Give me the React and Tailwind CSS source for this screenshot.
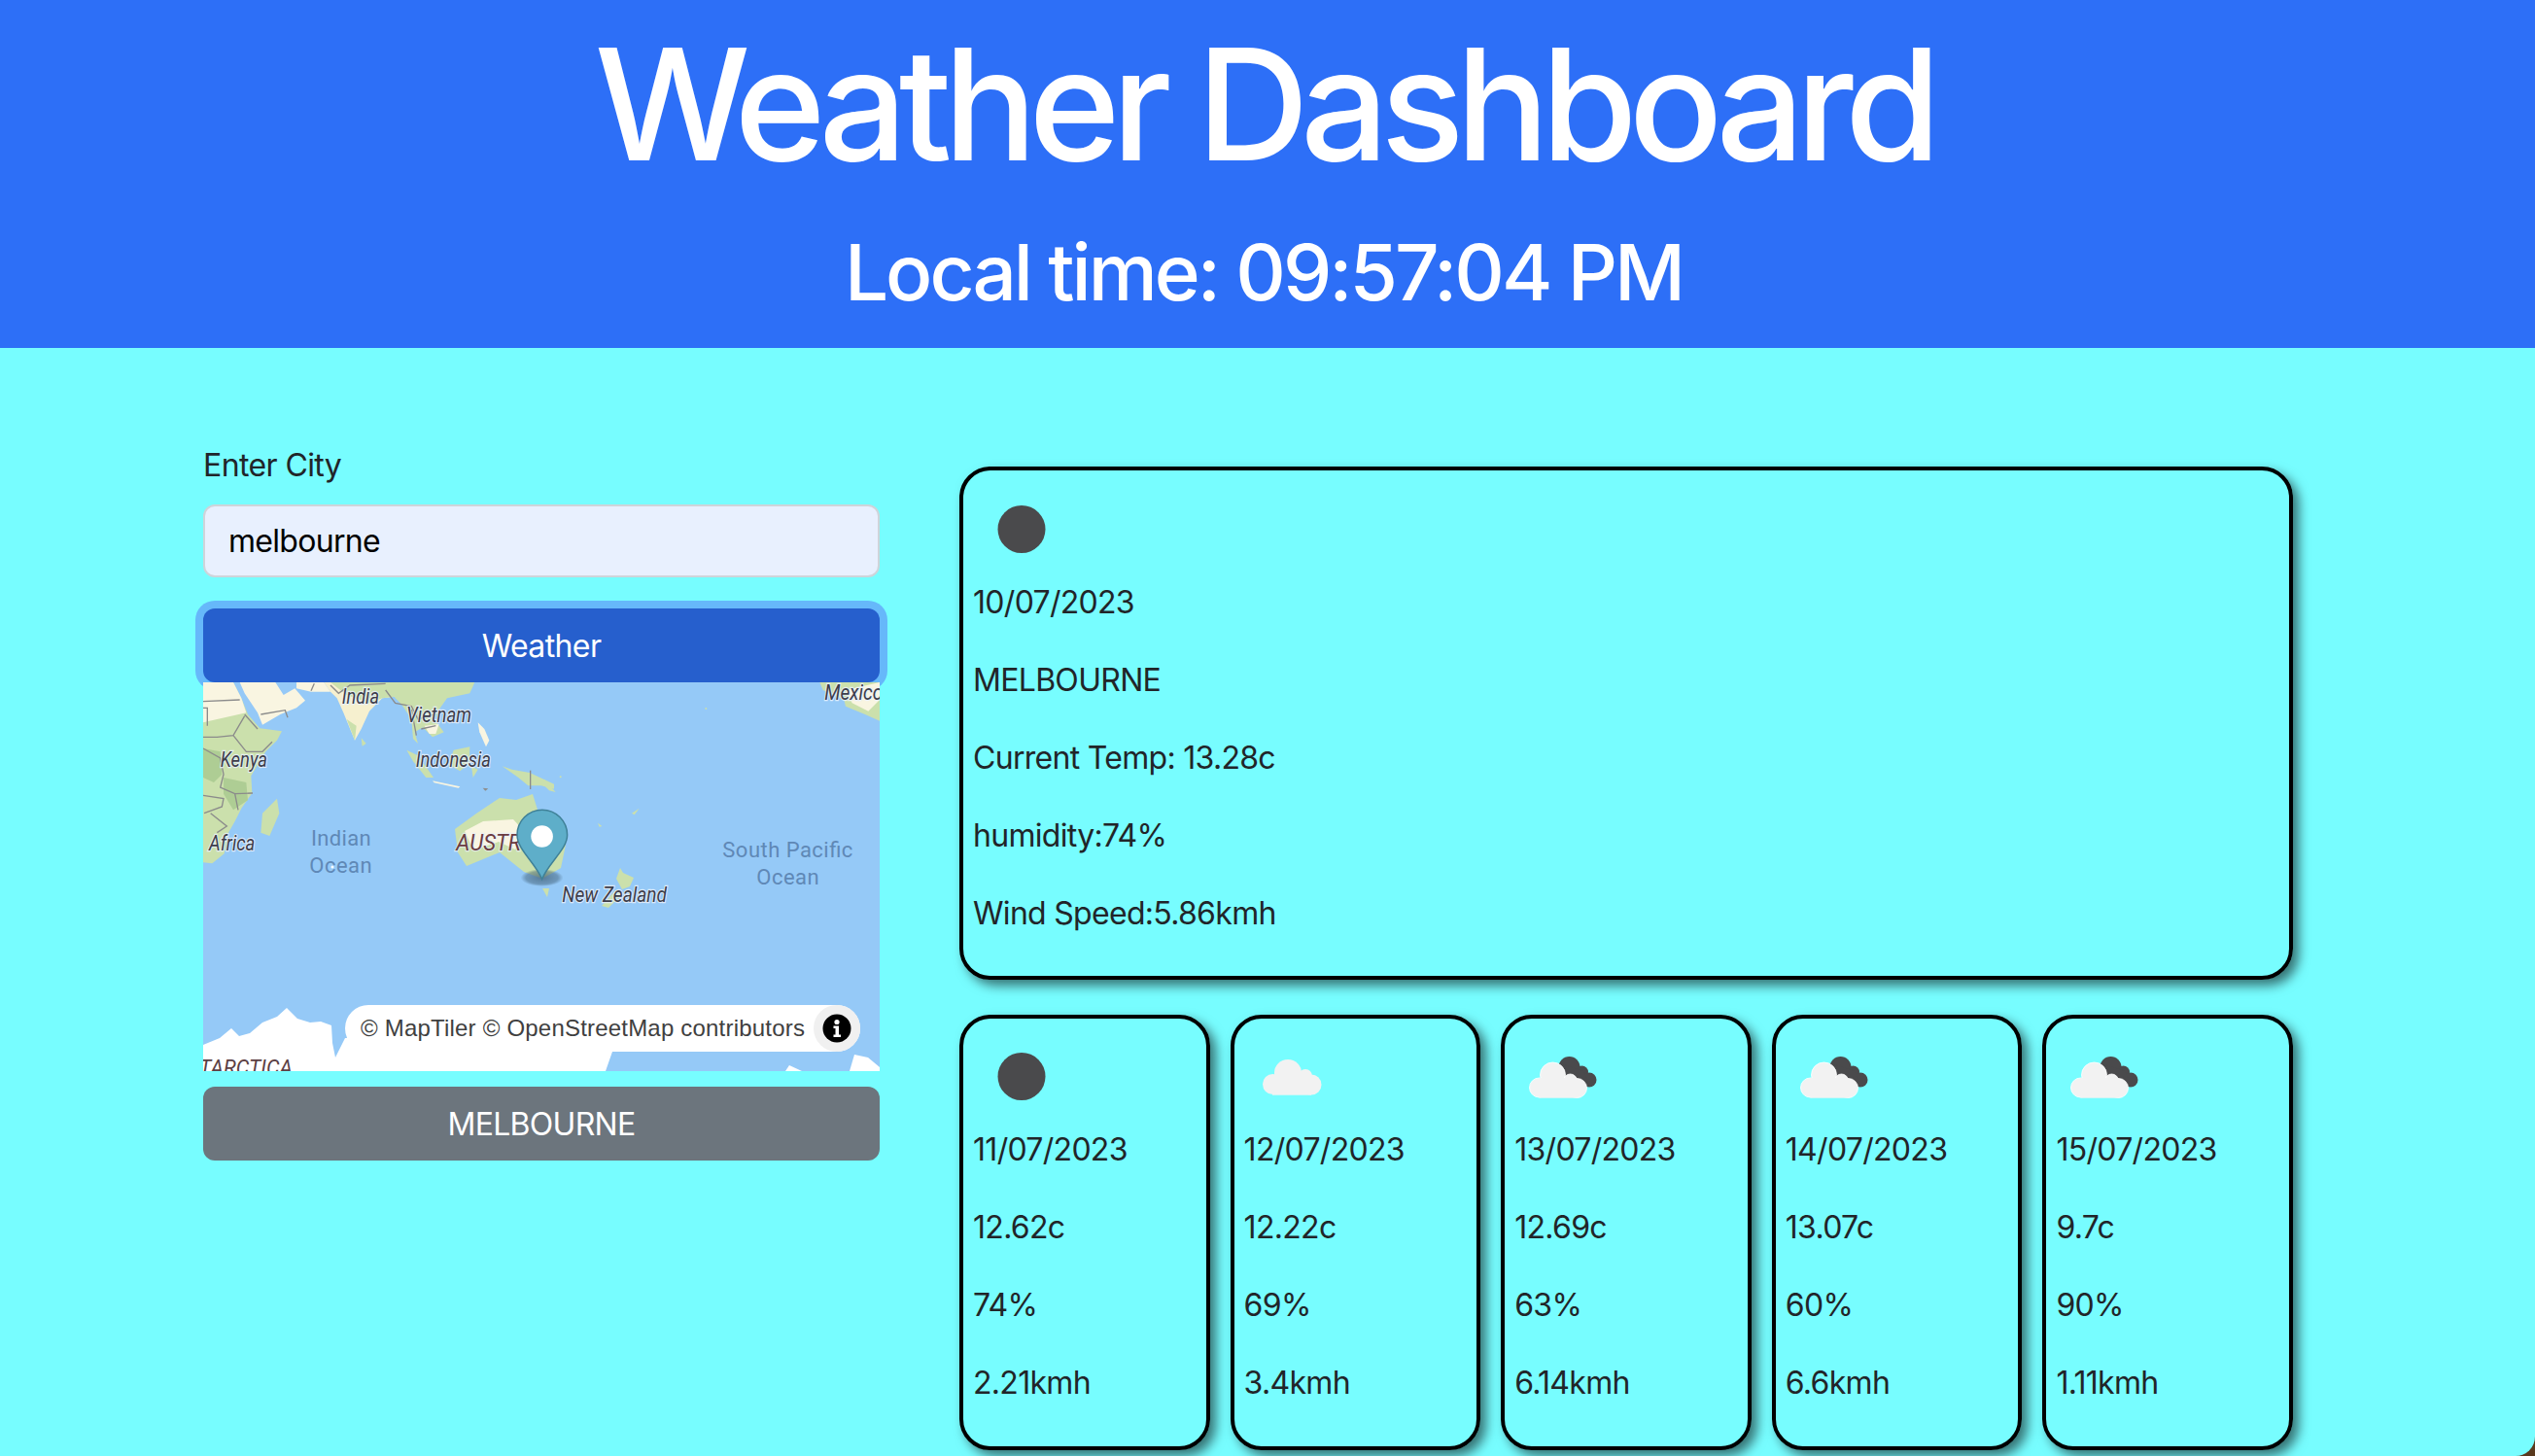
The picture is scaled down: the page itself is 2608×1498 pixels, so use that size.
import React from "react";

const ROW = "text-[32px] leading-[48px] mb-[32px] text-[#212529] whitespace-nowrap tracking-[-0.7px]";
const LABEL =
  "font-['Roboto',sans-serif] italic text-[66px] fill-[#3d3d4a] stroke-[#e8f0fb] stroke-[7px] [stroke-opacity:0.85] [paint-order:stroke]";
const OCEAN = "font-['Roboto',sans-serif] text-[66px] fill-[#5f88b6]";

function MoonIcon() {
  return (
    <svg className="block w-[100px] h-[100px] mb-[1px]" viewBox="0 0 100 100">
      <circle cx="50" cy="49.5" r="24.5" fill="#4a4a4c" />
    </svg>
  );
}

function CloudIcon() {
  return (
    <svg className="block w-[100px] h-[100px] mb-[1px]" viewBox="0 0 100 100">
      <g transform="translate(11 22)" fill="#f2f2f2">
        <circle cx="18.5" cy="35.5" r="10.5" />
        <circle cx="34" cy="24" r="14" />
        <circle cx="52" cy="27" r="7" />
        <circle cx="58" cy="36" r="10.5" />
        <rect x="18" y="30" width="40" height="16.7" />
      </g>
    </svg>
  );
}

function BrokenCloudIcon() {
  return (
    <svg className="block w-[100px] h-[100px] mb-[1px]" viewBox="0 0 100 100">
      <g transform="translate(1.5 17)">
        <g fill="#4a4a4c">
          <circle cx="55" cy="23" r="11" />
          <circle cx="68" cy="28" r="6.5" />
          <circle cx="75.5" cy="36" r="7.5" />
          <path d="M48 20 L70 27 L76 43 L60 42 Z" />
        </g>
        <g fill="#f2f2f2" stroke="#ffffff" strokeWidth="0.8">
          <circle cx="24" cy="44" r="10" />
          <circle cx="38" cy="31" r="13" />
          <circle cx="56" cy="37" r="7" />
          <circle cx="63" cy="44.5" r="10" />
          <rect x="24" y="34" width="39" height="20.7" stroke="none" />
        </g>
      </g>
    </svg>
  );
}

function MapDrawing() {
  const green = "#cbe0ac";
  const cream = "#f9f5e1";
  const deep = "#aecd94";
  const border = "#8b8b8b";
  return (
    <svg className="block w-[696px] h-[400px]" viewBox="209 702 696 400">
      <defs>
        <radialGradient id="pinShadow">
          <stop offset="0" stopColor="#3c5a70" stopOpacity="0.7" />
          <stop offset="0.75" stopColor="#3c5a70" stopOpacity="0.45" />
          <stop offset="1" stopColor="#3c5a70" stopOpacity="0" />
        </radialGradient>
      </defs>
      <rect x="209" y="702" width="696" height="400" fill="#95c9f7" />

      {/* land, west part */}
      <g transform="translate(190 690) scale(0.33333)" className="blur-[0.4px]">
        <polygon fill={green} points="57,36 150,36 175,85 195,135 232,178 300,187 285,215 250,250 225,290 205,325 208,378 175,425 155,465 135,500 122,565 85,595 57,592" />
        <polygon fill={cream} points="57,36 150,36 175,85 190,130 100,150 57,160" />
        <polygon fill={deep} points="57,240 110,250 115,320 90,345 57,330" />
        <polygon fill={deep} points="120,330 190,345 195,400 150,430 120,380" />
        <polygon fill={green} points="285,395 292,440 262,510 235,500 240,440" />
        <polygon fill={cream} points="170,36 280,36 305,75 340,55 372,92 345,115 295,135 240,167 225,130 185,70" />
        <polygon fill={cream} points="345,36 430,36 450,65 390,65 345,55" />
        <polygon fill="#f6f0cf" points="430,36 640,36 650,80 610,85 570,125 545,180 525,215 490,130 470,85 450,65" />
        <polygon fill={green} points="450,36 640,36 650,80 610,85 570,100 500,75" />
        <polygon fill={green} points="500,150 530,170 525,215" />
        <polygon fill={green} points="545,208 560,225 548,233" />
        <polygon fill={green} points="620,36 895,36 880,70 810,85 785,120 770,150 800,190 765,205 735,175 710,190 720,225 735,240 705,210 700,150 670,105 650,85" />
        <polygon fill={cream} points="740,170 785,165 775,195 755,195" />
        <polygon fill={green} points="685,245 720,262 768,330 745,330 705,280" />
        <polygon fill={green} points="830,245 880,235 878,285 850,310 815,290" />
        <polygon fill={green} points="885,295 905,305 890,330" />
        <polygon fill={cream} points="905,160 925,180 940,215 930,235 910,190" />
        <polygon fill={cream} points="765,340 850,358 845,362 770,346" />
        <polygon fill="#8e8e8e" points="920,362 937,364 928,371" />
        <polygon fill={green} points="980,295 1010,305 1065,315 1140,350 1140,365 1100,355 1060,355 1030,330" />
        <g fill="none" stroke={border} strokeWidth="4">
          <polyline points="57,95 170,90" />
          <polyline points="57,115 70,115 70,170" />
          <polyline points="185,135 225,180" />
          <polyline points="235,135 310,122 318,145" />
          <polyline points="57,205 100,205 150,200 185,140" />
          <polyline points="150,200 190,250 240,250 270,220" />
          <polyline points="57,240 110,270 120,320 110,360 155,380 210,378" />
          <polyline points="57,385 120,395 115,420 60,440" />
          <polyline points="80,440 130,480 100,500" />
          <polyline points="155,380 165,430" />
          <polyline points="400,40 390,62" />
          <polyline points="450,45 475,70 510,45 620,40" />
          <polyline points="620,60 650,100 700,110 720,150 770,135" />
          <polyline points="700,120 715,200" />
          <polyline points="730,180 775,170" />
          <polyline points="1067,308 1067,366" />
        </g>
      </g>
      <g transform="translate(560 690) scale(0.33333)" className="blur-[0.4px]">
        <polygon fill={green} points="850,36 1035,36 1035,155 990,135 930,110 925,90 860,60" />
        <polygon fill={cream} points="930,60 1035,36 1035,90 1000,125 950,100" />
        <polygon fill={green} points="0,335 35,375 15,370 0,355" />
        <polygon fill={green} points="270,440 293,425 278,445" />
        <polygon fill={green} points="165,470 178,480 170,482" />
        <circle cx="499" cy="117" r="3" fill={green} />
        <circle cx="50" cy="328" r="3" fill={green} />
      </g>
      {/* Australia, NZ */}
      <g className="blur-[0.4px]">
        <polygon fill={green} points="468,853 490,837 514,821 531,823 548,817 553,833 582,869 577,893 558,904 539,897 514,877 480,891 471,877" />
        <polygon fill={cream} points="478,855 497,845 528,843 540,856 530,874 513,866 487,875" />
        <polygon fill={green} points="558,914 565,914 563,923" />
        <polygon fill={green} points="638,893 641,898 652,903 648,912 640,915 634,904" />
        <polygon fill={green} points="633,916 640,920 626,934 619,932" />
        <circle cx="342" cy="892" r="1.5" fill="#ffffff" />
      </g>
      {/* Antarctica */}
      <polygon fill="#ffffff" points="209,1075 226,1068 238,1058 246,1066 257,1063 270,1052 285,1046 295,1037 306,1048 319,1052 330,1051 341,1055 342,1073 345,1088 355,1068 640,1068 630,1082 623,1102 209,1102" />
      <polygon fill="#ffffff" points="879,1085 893,1088 905,1098 905,1102 874,1102" />
      <polygon fill="#ffffff" points="812,1096 825,1102 808,1102" />

      {/* labels */}
      <g transform="translate(190 690) scale(0.33333)">
        <text x="485" y="102" textLength="115" lengthAdjust="spacingAndGlyphs" className={LABEL}>India</text>
        <text x="685" y="160" textLength="200" lengthAdjust="spacingAndGlyphs" className={LABEL}>Vietnam</text>
        <text x="713" y="298" textLength="232" lengthAdjust="spacingAndGlyphs" className={LABEL}>Indonesia</text>
        <text x="110" y="297" textLength="145" lengthAdjust="spacingAndGlyphs" className={LABEL}>Kenya</text>
        <text x="75" y="555" textLength="142" lengthAdjust="spacingAndGlyphs" className={LABEL}>Africa</text>
        <text x="838" y="555" textLength="200" lengthAdjust="spacingAndGlyphs" className="font-['Roboto',sans-serif] italic text-[72px] fill-[#6b3b40] stroke-[#e8f0fb] stroke-[7px] [stroke-opacity:0.7] [paint-order:stroke]">AUSTR</text>
        <text x="390" y="540" textLength="185" className={OCEAN}>Indian</text>
        <text x="385" y="625" textLength="193" className={OCEAN}>Ocean</text>
      </g>
      <g transform="translate(560 690) scale(0.33333)">
        <text x="550" y="575" textLength="402" className={OCEAN}>South Pacific</text>
        <text x="655" y="660" textLength="193" className={OCEAN}>Ocean</text>
        <text x="468" y="36" textLength="182" className={OCEAN}>Ocean</text>
        <text x="55" y="715" textLength="323" lengthAdjust="spacingAndGlyphs" className={LABEL}>New Zealand</text>
        <text x="865" y="90" textLength="180" lengthAdjust="spacingAndGlyphs" className={LABEL}>Mexico</text>
      </g>
      <text x="205" y="1106" textLength="96" lengthAdjust="spacingAndGlyphs" className="font-['Roboto',sans-serif] italic text-[22px] fill-[#5c3f44]">TARCTICA</text>

      {/* marker */}
      <ellipse cx="557.6" cy="903" rx="22" ry="9" fill="url(#pinShadow)" />
      <path d="M557.6 904.5 C551 888 532 874 532 859 A25.8 25.8 0 1 1 583.6 859 C583.6 874 564 888 557.6 904.5 Z" fill="#5eaec9" stroke="#3f8198" strokeWidth="1.5" />
      <circle cx="557.6" cy="860.5" r="11.3" fill="#ffffff" />
    </svg>
  );
}

function Attribution() {
  return (
    <div className="absolute right-[20px] bottom-[20px] h-[48px] w-[530px] bg-white rounded-[24px] flex items-center justify-between pl-[16px]">
      <span className="font-['Liberation_Sans',sans-serif] text-[24px] leading-[36px] tracking-[0.2px] text-[#404040] whitespace-nowrap">
        © MapTiler © OpenStreetMap contributors
      </span>
      <span className="w-[48px] h-[48px] rounded-full bg-[#f0f0f0] flex items-center justify-center shrink-0">
        <svg width="30" height="30" viewBox="0 0 30 30">
          <circle cx="15" cy="15" r="14.5" fill="#000000" />
          <circle cx="15" cy="8.5" r="2.6" fill="#ffffff" />
          <path d="M11.5 12.5 H17 V21.5 H19 V24 H11.5 V21.5 H13.5 V15 H11.5 Z" fill="#ffffff" />
        </svg>
      </span>
    </div>
  );
}

function ForecastCard({ icon, rows }) {
  return (
    <div className="h-[448px] border-[4px] border-black rounded-[32px] shadow-[6px_6px_12px_rgba(0,0,0,0.55)] px-[10px] pt-[10px]">
      {icon}
      {rows.map((r) => (
        <p key={r} className={ROW}>{r}</p>
      ))}
    </div>
  );
}

export default function App() {
  const days = [
    { icon: <MoonIcon />, rows: ["11/07/2023", "12.62c", "74%", "2.21kmh"] },
    { icon: <CloudIcon />, rows: ["12/07/2023", "12.22c", "69%", "3.4kmh"] },
    { icon: <BrokenCloudIcon />, rows: ["13/07/2023", "12.69c", "63%", "6.14kmh"] },
    { icon: <BrokenCloudIcon />, rows: ["14/07/2023", "13.07c", "60%", "6.6kmh"] },
    { icon: <BrokenCloudIcon />, rows: ["15/07/2023", "9.7c", "90%", "1.11kmh"] },
  ];
  const today = ["10/07/2023", "MELBOURNE", "Current Temp: 13.28c", "humidity:74%", "Wind Speed:5.86kmh"];

  return (
    <div className="w-[2608px] h-[1498px] overflow-hidden bg-[#5a3a1e] font-['Inter','Noto_Sans',sans-serif]">
      <div className="h-full bg-[#77fdff] rounded-br-[20px] overflow-hidden">
        <header className="h-[358px] bg-[#2d6ff7] text-white text-center pr-[8px] pt-[11px]">
          <h1 className="text-[160px] leading-[192px] font-medium tracking-[-8.6px]">Weather Dashboard</h1>
          <h2 className="mt-[29px] text-[80px] leading-[96px] font-medium tracking-[-3px]">Local time: 09:57:04 PM</h2>
        </header>
        <main className="flex pl-[209px]">
          <section className="w-[696px] pt-[97px] relative">
            <label className="block text-[32px] leading-[48px] mb-[16px] text-[#212529] tracking-[-0.6px]">Enter City</label>
            <div className="h-[75px] rounded-[12px] border-[2px] border-[#ced4da] bg-[#e8f0fe] flex items-center px-[24px] text-[32px] text-black tracking-[-0.7px] mb-[32px]">
              melbourne
            </div>
            <button className="block w-full h-[76px] pt-[2px] rounded-[12px] bg-[#265fcd] text-white text-[32px] tracking-[-0.6px] shadow-[0_0_0_8px_#66b8fa]">
              Weather
            </button>
            <div className="relative h-[400px] overflow-hidden">
              <MapDrawing />
              <Attribution />
            </div>
            <button className="block mt-[16px] w-full h-[76px] pt-[2px] rounded-[12px] bg-[#6c757d] text-white text-[32px] tracking-[-0.7px]">
              MELBOURNE
            </button>
          </section>
          <section className="w-[1372px] ml-[82px] pt-[122px]">
            <div className="h-[528px] border-[4px] border-black rounded-[32px] shadow-[6px_6px_12px_rgba(0,0,0,0.55)] px-[10px] pt-[11px]">
              <MoonIcon />
              {today.map((r) => (
                <p key={r} className={ROW}>{r}</p>
              ))}
            </div>
            <div className="grid grid-cols-5 gap-[21px] mt-[36px]">
              {days.map((d) => (
                <ForecastCard key={d.rows[0]} icon={d.icon} rows={d.rows} />
              ))}
            </div>
          </section>
        </main>
      </div>
    </div>
  );
}
